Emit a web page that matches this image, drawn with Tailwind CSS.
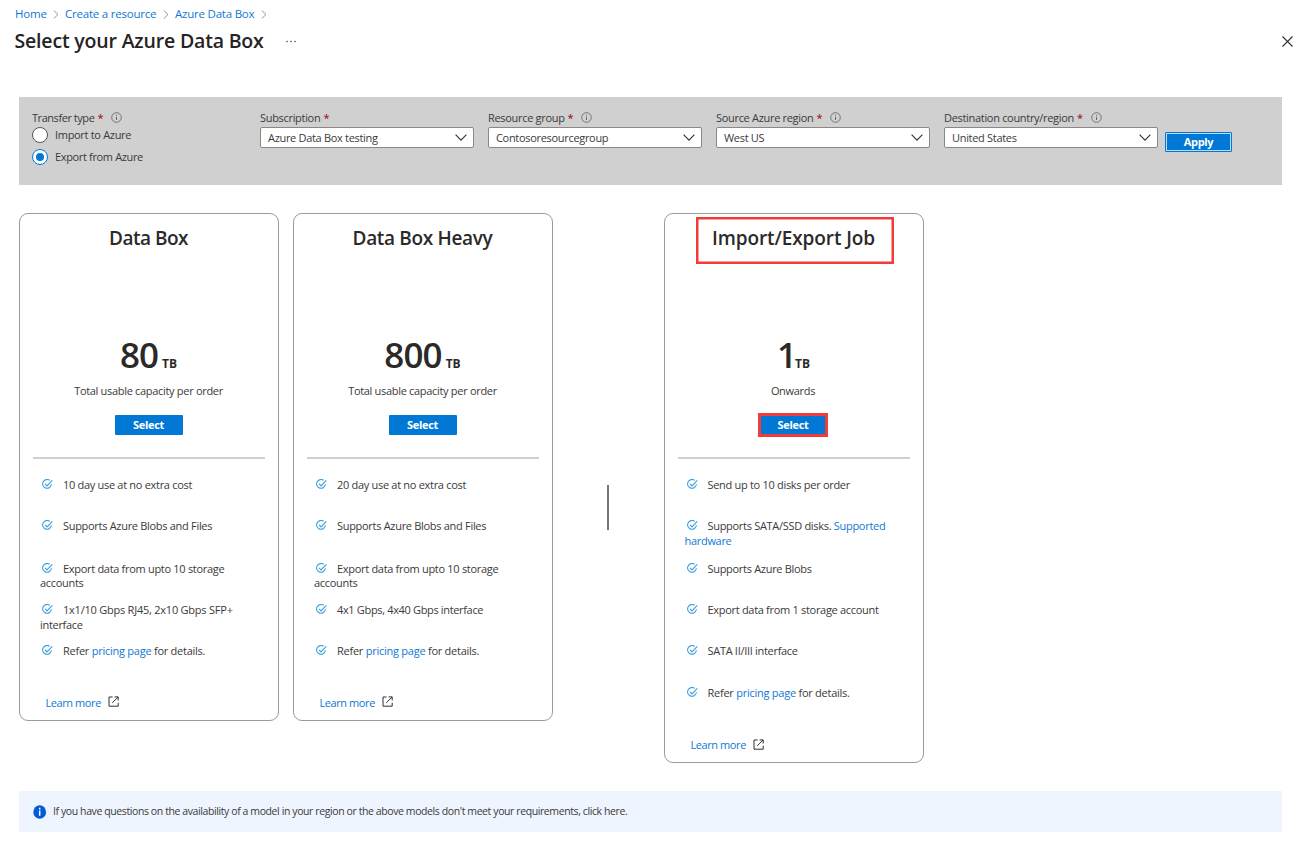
<!DOCTYPE html>
<html lang="en">
<head>
<meta charset="utf-8">
<title>Select your Azure Data Box</title>
<script src="https://cdn.jsdelivr.net/npm/@tailwindcss/browser@4"></script>
</head>
<body class="w-[1300px] h-[848px] overflow-hidden bg-white font-['Open_Sans','Noto_Sans',sans-serif] text-[11px] tracking-[-0.31px] text-[#3b3a39]">
<svg class="hidden">
  <symbol id="info" viewBox="0 0 11 11"><circle cx="5.5" cy="5.5" r="4.8" fill="none" stroke="#6b6b6b" stroke-width=".9"/><path d="M5.5 4.8v3.2M5.5 2.8v1" stroke="#6b6b6b" stroke-width="1"/></symbol>
  <symbol id="down" viewBox="0 0 12 7"><path d="M.6.7 6 6.1 11.4.7" fill="none" stroke="#323130" stroke-width="1.1"/></symbol>
  <symbol id="sep" viewBox="0 0 6 9"><path d="M.8.5 5 4.5.8 8.5" fill="none" stroke="#8a8a8a" stroke-width=".9"/></symbol>
  <symbol id="check" viewBox="0 0 11 11"><path d="M7.7 1.4A4.4 4.4 0 1 0 9.4 5.3M3 4.9l2 2L10.3 1.4" fill="none" stroke="#3aa0dc" stroke-width="1.1"/></symbol>
  <symbol id="ext" viewBox="0 0 11 11"><path d="M4.6 1H1v9.2h9.2V6.8M6.6.9h3.6v3.6M10 1.1 4.2 6.9" fill="none" stroke="#323130" stroke-width="1"/></symbol>
</svg>

<nav class="flex items-center pt-[7px] pl-[15px] text-[11.5px] tracking-[-0.22px] leading-[14px] text-[#0f78d4] h-[21px]">
  <a class="w-[32px]">Home</a><svg class="w-[6px] h-[9px] mx-[6px]"><use href="#sep"/></svg>
  <a class="w-[91px] whitespace-nowrap">Create a resource</a><svg class="w-[6px] h-[9px] mx-[6px] ml-[7px]"><use href="#sep"/></svg>
  <a class="w-[80px] whitespace-nowrap">Azure Data Box</a><svg class="w-[6px] h-[9px] mx-[6px]"><use href="#sep"/></svg>
</nav>

<header class="flex items-center h-[40px] pl-[14px] pr-[7px]">
  <h1 class="w-[271px] pl-[0.5px] text-[19.5px] font-semibold leading-[26px] tracking-[-0.18px] text-[#252423] whitespace-nowrap">Select your Azure Data Box</h1>
  <svg class="w-[12px] h-[3px]" viewBox="0 0 12 3" fill="#444"><circle cx="2" cy="1.5" r=".8"/><circle cx="6" cy="1.5" r=".8"/><circle cx="10" cy="1.5" r=".8"/></svg>
  <svg class="w-[11px] h-[11px] ml-auto" viewBox="0 0 11 11"><path d="M.5.5l10 10M10.5.5l-10 10" stroke="#323130" stroke-width="1.1"/></svg>
</header>

<section class="mt-[36px] ml-[19px] w-[1263px] h-[88px] bg-[#d0d0d0] flex pt-[13px] pl-[13px] leading-[14px]">
  <div class="w-[228px]">
    <div class="flex items-center h-[15px]"><span class="tracking-[-0.45px]">Transfer type</span><b class="ml-[3px] text-[#a4262c] font-semibold">*</b><svg class="w-[11px] h-[11px] ml-[8px]"><use href="#info"/></svg></div>
    <div class="flex items-center h-[22px] -mt-px"><i class="w-4 h-4 rounded-full border border-[#555] bg-white"></i><span class="ml-[7px]">Import to Azure</span></div>
    <div class="flex items-center h-[22px]"><i class="w-4 h-4 rounded-full border border-[#0078d4] bg-white flex items-center justify-center"><i class="w-2 h-2 rounded-full bg-[#0078d4]"></i></i><span class="ml-[7px] tracking-[-0.35px]">Export from Azure</span></div>
  </div>
  <div class="w-[228px]">
    <div class="flex items-center h-[15px]"><span>Subscription</span><b class="ml-[3px] text-[#a4262c] font-semibold">*</b></div>
    <div class="mt-[2px] w-[214px] h-[21px] rounded-[2px] border border-[#8a8886] bg-white flex items-center justify-between pl-[7px] pr-[6px]"><span>Azure Data Box testing</span><svg class="w-[12px] h-[7px]"><use href="#down"/></svg></div>
  </div>
  <div class="w-[228px]">
    <div class="flex items-center h-[15px]"><span>Resource group</span><b class="ml-[3px] text-[#a4262c] font-semibold">*</b><svg class="w-[11px] h-[11px] ml-[8px]"><use href="#info"/></svg></div>
    <div class="mt-[2px] w-[214px] h-[21px] rounded-[2px] border border-[#8a8886] bg-white flex items-center justify-between pl-[7px] pr-[6px]"><span>Contosoresourcegroup</span><svg class="w-[12px] h-[7px]"><use href="#down"/></svg></div>
  </div>
  <div class="w-[228px]">
    <div class="flex items-center h-[15px]"><span>Source Azure region</span><b class="ml-[3px] text-[#a4262c] font-semibold">*</b><svg class="w-[11px] h-[11px] ml-[8px]"><use href="#info"/></svg></div>
    <div class="mt-[2px] w-[214px] h-[21px] rounded-[2px] border border-[#8a8886] bg-white flex items-center justify-between pl-[7px] pr-[6px]"><span>West US</span><svg class="w-[12px] h-[7px]"><use href="#down"/></svg></div>
  </div>
  <div class="w-[221px]">
    <div class="flex items-center h-[15px]"><span>Destination country/region</span><b class="ml-[3px] text-[#a4262c] font-semibold">*</b><svg class="w-[11px] h-[11px] ml-[8px]"><use href="#info"/></svg></div>
    <div class="mt-[2px] w-[214px] h-[21px] rounded-[2px] border border-[#8a8886] bg-white flex items-center justify-between pl-[7px] pr-[6px]"><span>United States</span><svg class="w-[12px] h-[7px]"><use href="#down"/></svg></div>
  </div>
  <button class="mt-[22px] w-[67px] h-[20px] rounded-[1px] border border-[#0078d4] bg-[#0078d4] p-0 flex"><span class="flex-1 h-[18px] border border-[#b9dbf5] text-white font-bold leading-[15px]">Apply</span></button>
</section>

<main class="flex items-start mt-[28px] ml-[18.5px] h-[578px] leading-[14.3px]">
  <article class="w-[260px] h-[508px] border border-[#9b9b9b] rounded-[9px] flex flex-col items-center">
    <h2 class="mt-[11px] h-[26px] leading-[26px] text-[19px] font-semibold tracking-[-0.5px] text-[#2b2a29]">Data Box</h2>
    <div class="mt-[81px] h-[46px] flex items-baseline text-[#2b2a29]"><span class="text-[35px] leading-[46px] font-semibold tracking-[-0.9px]">80</span><b class="ml-[4px] text-[12px] tracking-normal">TB</b></div>
    <p class="mt-[6px]">Total usable capacity per order</p>
    <button class="mt-[17px] w-[68px] h-[20px] rounded-[1px] bg-[#0078d4] text-white font-bold leading-[18px]">Select</button>
    <hr class="mt-[22px] w-[232px] border-0 h-[2px] bg-[#cfcfcf]">
    <ul class="mt-[19px] w-full pl-[20.5px] tracking-[-0.3px]">
      <li class="h-[41px]"><svg class="inline-block align-[-1px] w-[11px] h-[11px] ml-[2px] mr-[10px]"><use href="#check"/></svg>10 day use at no extra cost</li>
      <li class="h-[42.5px]"><svg class="inline-block align-[-1px] w-[11px] h-[11px] ml-[2px] mr-[10px]"><use href="#check"/></svg>Supports Azure Blobs and Files</li>
      <li class="h-[41.5px]"><svg class="inline-block align-[-1px] w-[11px] h-[11px] ml-[2px] mr-[10px]"><use href="#check"/></svg>Export data from upto 10 storage<br>accounts</li>
      <li class="h-[41px]"><svg class="inline-block align-[-1px] w-[11px] h-[11px] ml-[2px] mr-[10px]"><use href="#check"/></svg><span class="tracking-[-0.23px]">1x1/10 Gbps RJ45, 2x10 Gbps SFP+</span><br>interface</li>
      <li class="h-[41.5px] tracking-[-0.25px]"><svg class="inline-block align-[-1px] w-[11px] h-[11px] ml-[2px] mr-[10px]"><use href="#check"/></svg>Refer <a class="text-[#0f78d4]">pricing page</a> for details.</li>
    </ul>
    <div class="mt-[10px] w-full pl-[26px] flex items-center"><a class="text-[#0f78d4] tracking-[-0.42px]">Learn more</a><svg class="w-[11px] h-[11px] ml-[7px] -mt-[2px]"><use href="#ext"/></svg></div>
  </article>

  <article class="ml-[14px] w-[260px] h-[508px] border border-[#9b9b9b] rounded-[9px] flex flex-col items-center">
    <h2 class="mt-[11px] h-[26px] leading-[26px] text-[19px] font-semibold tracking-[-0.33px] text-[#2b2a29]">Data Box Heavy</h2>
    <div class="mt-[81px] h-[46px] flex items-baseline text-[#2b2a29]"><span class="text-[35px] leading-[46px] font-semibold tracking-[-0.9px]">800</span><b class="ml-[4px] text-[12px] tracking-normal">TB</b></div>
    <p class="mt-[6px]">Total usable capacity per order</p>
    <button class="mt-[17px] w-[68px] h-[20px] rounded-[1px] bg-[#0078d4] text-white font-bold leading-[18px]">Select</button>
    <hr class="mt-[22px] w-[232px] border-0 h-[2px] bg-[#cfcfcf]">
    <ul class="mt-[19px] w-full pl-[20.5px] tracking-[-0.3px]">
      <li class="h-[41px]"><svg class="inline-block align-[-1px] w-[11px] h-[11px] ml-[2px] mr-[10px]"><use href="#check"/></svg>20 day use at no extra cost</li>
      <li class="h-[42.5px]"><svg class="inline-block align-[-1px] w-[11px] h-[11px] ml-[2px] mr-[10px]"><use href="#check"/></svg>Supports Azure Blobs and Files</li>
      <li class="h-[41.5px]"><svg class="inline-block align-[-1px] w-[11px] h-[11px] ml-[2px] mr-[10px]"><use href="#check"/></svg>Export data from upto 10 storage<br>accounts</li>
      <li class="h-[41px]"><svg class="inline-block align-[-1px] w-[11px] h-[11px] ml-[2px] mr-[10px]"><use href="#check"/></svg><span class="tracking-[-0.34px]">4x1 Gbps, 4x40 Gbps interface</span></li>
      <li class="h-[41.5px] tracking-[-0.25px]"><svg class="inline-block align-[-1px] w-[11px] h-[11px] ml-[2px] mr-[10px]"><use href="#check"/></svg>Refer <a class="text-[#0f78d4]">pricing page</a> for details.</li>
    </ul>
    <div class="mt-[10px] w-full pl-[26px] flex items-center"><a class="text-[#0f78d4] tracking-[-0.42px]">Learn more</a><svg class="w-[11px] h-[11px] ml-[7px] -mt-[2px]"><use href="#ext"/></svg></div>
  </article>

  <div class="ml-[54px] mt-[272px] w-[2px] h-[45px] bg-[#757575]"></div>

  <article class="relative ml-[55px] w-[260px] h-[550px] border border-[#9b9b9b] rounded-[9px] flex flex-col items-center">
    <div class="absolute left-[31.5px] top-[3px] w-[198px] h-[47px] border-[2.5px] shadow-[inset_0_0_0_0.5px_#f23b3b] border-[#f23b3b]"></div>
    <h2 class="mt-[11px] h-[26px] leading-[26px] text-[19px] font-semibold tracking-[-0.1px] text-[#2b2a29]">Import/Export Job</h2>
    <div class="mt-[81px] h-[46px] flex items-baseline text-[#2b2a29]"><span class="text-[35px] leading-[46px] font-semibold tracking-[-2px]">1</span><b class="text-[12px] tracking-normal">TB</b></div>
    <p class="mt-[6px] mr-px">Onwards</p>
    <button class="mt-[17px] mr-px w-[66px] h-[20px] bg-[#0078d4] border border-[#f23b3b] outline-2 outline-[#f23b3b] text-white font-bold leading-[16px]">Select</button>
    <hr class="mt-[22px] w-[232px] border-0 h-[2px] bg-[#cfcfcf]">
    <ul class="mt-[19px] w-full pl-[20px] tracking-[-0.3px]">
      <li class="h-[41px]"><svg class="inline-block align-[-1px] w-[11px] h-[11px] ml-[2px] mr-[10px]"><use href="#check"/></svg>Send up to 10 disks per order</li>
      <li class="h-[42.5px]"><svg class="inline-block align-[-1px] w-[11px] h-[11px] ml-[2px] mr-[10px]"><use href="#check"/></svg>Supports SATA/SSD disks. <a class="text-[#0f78d4]">Supported<br>hardware</a></li>
      <li class="h-[41.5px]"><svg class="inline-block align-[-1px] w-[11px] h-[11px] ml-[2px] mr-[10px]"><use href="#check"/></svg>Supports Azure Blobs</li>
      <li class="h-[41px]"><svg class="inline-block align-[-1px] w-[11px] h-[11px] ml-[2px] mr-[10px]"><use href="#check"/></svg>Export data from 1 storage account</li>
      <li class="h-[41.5px]"><svg class="inline-block align-[-1px] w-[11px] h-[11px] ml-[2px] mr-[10px]"><use href="#check"/></svg>SATA II/III interface</li>
      <li class="h-[41.5px] tracking-[-0.25px]"><svg class="inline-block align-[-1px] w-[11px] h-[11px] ml-[2px] mr-[10px]"><use href="#check"/></svg>Refer <a class="text-[#0f78d4]">pricing page</a> for details.</li>
    </ul>
    <div class="mt-[11px] w-full pl-[26px] flex items-center"><a class="text-[#0f78d4] tracking-[-0.42px]">Learn more</a><svg class="w-[11px] h-[11px] ml-[7px] -mt-[2px]"><use href="#ext"/></svg></div>
  </article>
</main>

<footer class="ml-[19px] w-[1263px] h-[41px] bg-[#eff5ff] flex items-center pl-[14px]">
  <svg class="w-[14px] h-[14px]" viewBox="0 0 14 14"><ellipse cx="6.7" cy="7" rx="6.4" ry="6.8" fill="#015cda"/><path d="M6.7 5.6v5.2M6.7 2.8v1.7" stroke="#fff" stroke-width="1.5"/></svg>
  <p class="ml-[6px] text-[10.5px] tracking-[-0.403px] whitespace-nowrap">If you have questions on the availability of a model in your region or the above models don't meet your requirements, click here.</p>
</footer>
</body>
</html>
